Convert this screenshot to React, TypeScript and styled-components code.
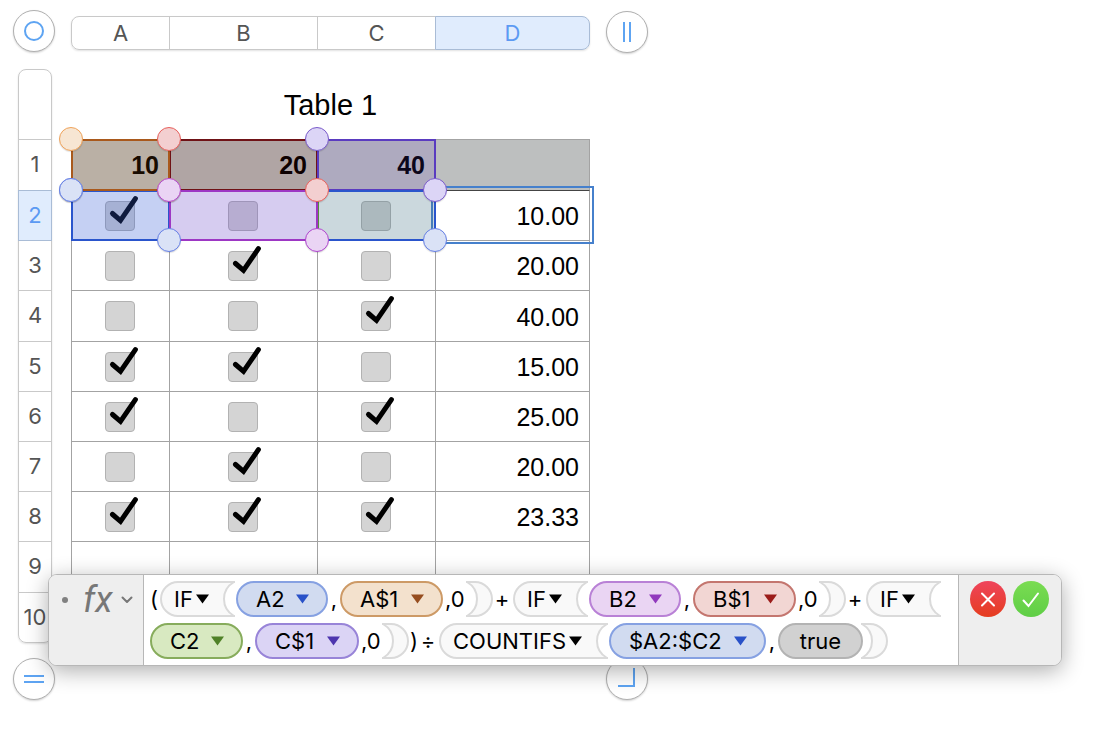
import React from 'react';
import styled, { createGlobalStyle, css } from 'styled-components';

const GlobalStyle = createGlobalStyle`
  *, *::before, *::after { box-sizing: border-box; }
  body {
    margin: 0;
    background: #fff;
    color: #000;
    font-family: Inter, "Liberation Sans", sans-serif;
  }
  button { font: inherit; color: inherit; cursor: pointer; }
`;

const COLUMN_TRACKS = '98px 148px 118px 155px';
const ROW_TRACKS = '51px 50px 50px 51px 50px 50px 50px 50px 51px 50px';

/* ---------- Sheet ---------- */

const Page = styled.main`
  position: relative;
  min-height: 100vh;
  padding: 10px 0 37px 13px;
`;

const Sheet = styled.section`
  display: grid;
  grid-template-columns: 42px max-content 42px;
  column-gap: 16px;
  align-items: start;
`;

const RoundButton = styled.button<{ $top?: number }>`
  display: flex;
  align-items: center;
  justify-content: center;
  width: 42px;
  height: 42px;
  margin-top: ${(p) => p.$top ?? 0}px;
  padding: 0;
  border: 1px solid #b0b0b0;
  border-radius: 50%;
  background: #fff;
  box-shadow: 0 1px 2px rgba(0, 0, 0, 0.18);
  svg { display: block; fill: none; stroke: #5ea4f2; stroke-width: 2; }
`;

const HeaderButton = styled.button<{ $selected?: boolean }>`
  padding: 0;
  border: 1px solid #c9c9c9;
  background: #fff;
  color: #555;
  font-size: 22px;
  line-height: 26px;
  ${(p) =>
    p.$selected &&
    css`
      z-index: 1;
      border-color: #a9bcd6;
      background: #e0ecfd;
      color: #5c9af3;
    `}
`;

const ColumnBar = styled.div`
  display: grid;
  grid-template-columns: ${COLUMN_TRACKS};
  height: 34px;
  margin: 6px 0 19px;
  border-radius: 8px;
  box-shadow: 0 1px 2px rgba(0, 0, 0, 0.12);
  ${HeaderButton}:not(:last-child) { margin-right: -1px; }
  ${HeaderButton}:first-child { border-radius: 8px 0 0 8px; }
  ${HeaderButton}:last-child { border-radius: 0 8px 8px 0; }
`;

const RowBar = styled.div`
  display: grid;
  grid-template-rows: 70px ${ROW_TRACKS};
  width: 34px;
  margin: 0 3px 0 5px;
  padding-bottom: 1px;
  border-radius: 8px;
  box-shadow: 0 1px 2px rgba(0, 0, 0, 0.12);
  ${HeaderButton} { margin-bottom: -1px; padding-bottom: 2px; }
  ${HeaderButton}:first-child { border-radius: 8px 8px 0 0; }
  ${HeaderButton}:last-child { border-radius: 0 0 8px 8px; }
`;

const TableArea = styled.div`
  position: relative;
  margin-bottom: 16px;
  font-family: "Liberation Sans", Arial, sans-serif;
`;

const DataTable = styled.table`
  width: 519px;
  table-layout: fixed;
  border-collapse: separate;
  border-spacing: 0;
  font-size: 25px;
  line-height: 28px;
`;

const Caption = styled.caption`
  height: 70px;
  padding-top: 18px;
  font-size: 29px;
  line-height: 36px;
`;

const cell = css`
  padding: 1px 10px 0 0;
  border: 0 solid #a3a3a3;
  border-width: 1px 0 0 1px;
  text-align: right;
  &:last-child { border-right-width: 1px; }
`;

const HeadCell = styled.th`
  ${cell}
  padding-top: 0;
  padding-bottom: 1px;
  background: #bdbfbf;
  font-weight: 700;
`;

const Cell = styled.td`
  ${cell}
`;

const CheckCell = styled.td`
  ${cell}
  padding: 10px 2px 0 0;
  vertical-align: top;
`;

const Row = styled.tr<{ $tall?: boolean; $first?: boolean; $last?: boolean }>`
  height: ${(p) => (p.$tall ? 51 : 50)}px;
  ${(p) => p.$first && css`td { border-top-color: #444; }`}
  ${(p) => p.$last && css`td { border-bottom-width: 1px; }`}
`;

const CheckLabel = styled.label`
  position: relative;
  display: block;
  width: 30px;
  height: 30px;
  margin: 0 auto;
  svg {
    position: absolute;
    inset: 0;
    overflow: visible;
    pointer-events: none;
  }
`;

const CheckInput = styled.input`
  appearance: none;
  display: block;
  width: 30px;
  height: 30px;
  margin: 0;
  border: 1px solid #b2b2b2;
  border-radius: 4px;
  background: #d4d4d4;
`;

/* ---------- Highlighted ranges over the cells ---------- */

const RangeLayer = styled.div`
  position: absolute;
  top: 70px;
  left: 0;
  display: grid;
  grid-template-columns: ${COLUMN_TRACKS};
  grid-template-rows: ${ROW_TRACKS};
  pointer-events: none;
`;

const RangeArea = styled.div<{ $area: string }>`
  position: relative;
  grid-area: ${(p) => p.$area};
  margin: 0 -1px -1px 0;
`;

const RangeBox = styled(RangeArea)<{ $line: string; $fill: string }>`
  border: 2px solid ${(p) => p.$line};
  background: ${(p) => p.$fill};
`;

const EditingBox = styled.div`
  grid-area: 2 / 4 / 3 / 5;
  margin: -4px -4px;
  border: 2px solid #4680cc;
`;

const Handle = styled.span<{ $line: string; $fill: string; $end?: boolean }>`
  position: absolute;
  ${(p) => (p.$end ? 'right: -11px; bottom: -11px;' : 'left: -12px; top: -12px;')}
  width: 24px;
  height: 24px;
  border: 1px solid ${(p) => p.$line};
  border-radius: 50%;
  background: ${(p) => p.$fill};
  box-shadow: 0 1px 1px rgba(0, 0, 0, 0.12);
`;

/* ---------- Formula bar ---------- */

const FormulaBar = styled.section`
  position: absolute;
  z-index: 2;
  top: 574px;
  left: 48px;
  right: 44px;
  display: flex;
  min-height: 92px;
  border: 1px solid #b7b7b7;
  border-radius: 9px;
  background: #fff;
  box-shadow: 0 5px 22px rgba(0, 0, 0, 0.32);
  overflow: hidden;
`;

const FunctionPanel = styled.div`
  flex: none;
  display: flex;
  align-items: flex-start;
  gap: 15px;
  width: 95px;
  padding: 6px 0 0 13px;
  border-right: 1px solid #b7b7b7;
  background: #eee;
`;

const Bullet = styled.span`
  width: 6px;
  height: 6px;
  margin-top: 16px;
  border-radius: 50%;
  background: #808080;
`;

const FunctionMenu = styled.button`
  display: flex;
  align-items: center;
  gap: 9px;
  height: 38px;
  padding: 0;
  border: 0;
  background: none;
  color: #777;
  font-family: Roboto, "Liberation Sans", sans-serif;
  font-size: 36px;
  font-style: italic;
  line-height: 38px;
  svg { display: block; }
`;

const Formula = styled.div`
  flex: 1;
  display: flex;
  flex-wrap: wrap;
  align-content: flex-start;
  row-gap: 6px;
  padding: 6px 0 6px 6px;
  font-size: 22px;
  line-height: 36px;
  white-space: nowrap;
`;

const Glyph = styled.span<{ $w: number }>`
  width: ${(p) => p.$w}px;
  height: 36px;
  text-align: center;
`;

const Paren = styled(Glyph)`
  text-align: left;
`;

const Argument = styled(Glyph)`
  padding-left: 2px;
  text-align: left;
`;

const Operator = styled(Glyph)`
  padding-right: 2px;
`;

const Pill = styled.button<{ $w: number; $line: string; $fill: string }>`
  display: flex;
  align-items: center;
  justify-content: space-between;
  width: ${(p) => p.$w}px;
  height: 36px;
  padding: 0 17px 0 18px;
  border: 2px solid ${(p) => p.$line};
  border-radius: 18px;
  background: ${(p) => p.$fill};
  line-height: 32px;
`;

const ValuePill = styled(Pill)`
  justify-content: center;
  margin-right: -3px;
  padding: 0;
`;

const Func = styled.button<{ $w: number }>`
  position: relative;
  display: flex;
  align-items: center;
  justify-content: space-between;
  width: ${(p) => p.$w}px;
  height: 36px;
  padding: 0 27px 0 14px;
  border: 0;
  background: none;
`;

const FuncShape = styled.svg`
  position: absolute;
  inset: 0;
  fill: #f9f9f9;
  stroke: #dadada;
  stroke-width: 2;
`;

const FuncName = styled.span`
  position: relative;
`;

const CloseShape = styled.svg`
  display: block;
  fill: #f9f9f9;
  stroke: #dadada;
  stroke-width: 2;
`;

const Arrow = styled.svg`
  position: relative;
  display: block;
`;

const ActionPanel = styled.div`
  flex: none;
  display: flex;
  align-items: flex-start;
  gap: 7px;
  width: 103px;
  padding: 6px 0 0 11px;
  border-left: 1px solid #b7b7b7;
  background: #eee;
`;

const ActionButton = styled.button<{ $from: string; $to: string }>`
  width: 36px;
  height: 36px;
  padding: 0;
  border: 0;
  border-radius: 50%;
  background: linear-gradient(${(p) => p.$from}, ${(p) => p.$to});
  svg { display: block; fill: none; stroke: #fff; stroke-width: 2; stroke-linecap: round; }
`;

/* ---------- Data ---------- */

const columns = ['A', 'B', 'C', 'D'];

const rows: { checks: boolean[]; total: string }[] = [
  { checks: [true, false, false], total: '10.00' },
  { checks: [false, true, false], total: '20.00' },
  { checks: [false, false, true], total: '40.00' },
  { checks: [true, true, false], total: '15.00' },
  { checks: [true, false, true], total: '25.00' },
  { checks: [false, true, false], total: '20.00' },
  { checks: [true, true, true], total: '23.33' },
];

const ranges = [
  { area: '1 / 2 / 2 / 3', line: '#6f1216', fill: 'rgba(96, 7, 0, 0.14)' },
  { area: '1 / 3 / 2 / 4', line: '#5a3bc0', fill: 'rgba(82, 40, 192, 0.14)' },
  { area: '2 / 3 / 3 / 4', line: '#57903c', fill: 'rgba(73, 119, 136, 0.286)' },
  { area: '2 / 1 / 3 / 4', line: '#2a55cc', fill: 'transparent' },
  { area: '2 / 1 / 3 / 2', line: '#2a55cc', fill: 'rgba(52, 91, 213, 0.286)' },
  { area: '2 / 2 / 3 / 3', line: '#9d37c4', fill: 'rgba(112, 77, 203, 0.286)' },
  { area: '1 / 1 / 2 / 2', line: '#a9591c', fill: 'rgba(167, 84, 8, 0.14)' },
];

const handles = [
  { area: '1 / 1 / 2 / 2', line: '#f0a35a', fill: '#f7e6d3' },
  { area: '1 / 3 / 2 / 4', line: '#7a5bcb', fill: '#dcd5f6' },
  { area: '1 / 2 / 2 / 3', line: '#e8605c', fill: '#f3cfd0' },
  { area: '2 / 1 / 3 / 2', line: '#6680e6', fill: '#dae2f6' },
  { area: '2 / 2 / 3 / 3', line: '#b045cf', fill: '#ead4f4' },
  { area: '2 / 1 / 3 / 4', line: '#6680e6', fill: '#dae2f6' },
];

const tones = {
  blue: { line: '#86a1e2', fill: '#d1dbf0', arrow: '#2951c8' },
  orange: { line: '#cd9a66', fill: '#f3e1cd', arrow: '#964d1f' },
  violet: { line: '#b981d6', fill: '#ead5f3', arrow: '#9139bd' },
  red: { line: '#c4766f', fill: '#f2d6d3', arrow: '#9b1c1a' },
  green: { line: '#87ac5c', fill: '#d8e9c1', arrow: '#4f8127' },
  purple: { line: '#9884d8', fill: '#dbd4f5', arrow: '#4d35ae' },
};

/* ---------- Parts ---------- */

function CheckBox({ name, checked }: { name: string; checked: boolean }) {
  return (
    <CheckLabel>
      <CheckInput type="checkbox" aria-label={name} checked={checked} readOnly />
      {checked && (
        <svg width="30" height="30" viewBox="0 0 30 30" fill="none" stroke="#000" strokeWidth="5" strokeLinecap="round">
          <path d="M7.5 12.5 L15.5 19.4 L30.4 -2.4" />
        </svg>
      )}
    </CheckLabel>
  );
}

function Triangle({ color = '#000' }: { color?: string }) {
  return (
    <Arrow width="13" height="10" viewBox="0 0 13 10">
      <path d="M0 0.5 H13 L6.5 9.5 Z" fill={color} />
    </Arrow>
  );
}

function Reference({ tone, w, children }: { tone: keyof typeof tones; w: number; children: string }) {
  const t = tones[tone];
  return (
    <Pill type="button" $w={w} $line={t.line} $fill={t.fill}>
      {children}
      <Triangle color={t.arrow} />
    </Pill>
  );
}

function FunctionOpen({ w, children }: { w: number; children: string }) {
  const notch = `C${w - 9} 5 ${w - 12} 11 ${w - 12} 18 C${w - 12} 25 ${w - 9} 31 ${w - 2} 35`;
  return (
    <Func type="button" $w={w}>
      <FuncShape width={w} height="36" viewBox={`0 0 ${w} 36`}>
        <path stroke="none" d={`M18 1 H${w - 2} ${notch} H18 A17 17 0 0 1 18 1 Z`} />
        <path fill="none" d={`M${w - 1} 1 H18 A17 17 0 0 0 18 35 H${w - 1}`} />
        <path fill="none" d={`M${w - 2} 1 ${notch}`} />
      </FuncShape>
      <FuncName>{children}</FuncName>
      <Triangle />
    </Func>
  );
}

function FunctionClose() {
  const notch = 'C9 5 12 11 12 18 C12 25 9 31 2 35';
  return (
    <CloseShape width="28" height="36" viewBox="0 0 28 36">
      <path stroke="none" d={`M2 1 ${notch} H10 A17 17 0 0 0 10 1 Z`} />
      <path fill="none" d="M1 1 H10 A17 17 0 0 1 10 35 H1" />
      <path fill="none" d={`M2 1 ${notch}`} />
    </CloseShape>
  );
}

export default function App() {
  return (
    <Page>
      <GlobalStyle />
      <Sheet>
        <RoundButton type="button" aria-label="Select table">
          <svg width="22" height="22"><circle cx="11" cy="11" r="9" /></svg>
        </RoundButton>
        <ColumnBar>
          {columns.map((c) => (
            <HeaderButton key={c} type="button" $selected={c === 'D'}>{c}</HeaderButton>
          ))}
        </ColumnBar>
        <RoundButton type="button" aria-label="Add column" $top={1}>
          <svg width="22" height="22"><path d="M8 1 V21 M14 1 V21" /></svg>
        </RoundButton>

        <RowBar>
          <HeaderButton type="button" aria-label="Table title" />
          {Array.from({ length: 10 }, (_, i) => (
            <HeaderButton key={i} type="button" $selected={i === 1}>{i + 1}</HeaderButton>
          ))}
        </RowBar>
        <TableArea>
          <DataTable>
            <Caption>Table 1</Caption>
            <colgroup>
              <col width="98" /><col width="148" /><col width="118" /><col width="155" />
            </colgroup>
            <thead>
              <Row $tall>
                <HeadCell>10</HeadCell>
                <HeadCell>20</HeadCell>
                <HeadCell>40</HeadCell>
                <HeadCell />
              </Row>
            </thead>
            <tbody>
              {rows.map((r, i) => (
                <Row key={i} $first={i === 0} $tall={i === 2}>
                  {r.checks.map((on, c) => (
                    <CheckCell key={c}><CheckBox name={`${columns[c]}${i + 2}`} checked={on} /></CheckCell>
                  ))}
                  <Cell>{r.total}</Cell>
                </Row>
              ))}
              <Row $tall><Cell /><Cell /><Cell /><Cell /></Row>
              <Row $last><Cell /><Cell /><Cell /><Cell /></Row>
            </tbody>
          </DataTable>
          <RangeLayer>
            {ranges.map((r, i) => (
              <RangeBox key={i} $area={r.area} $line={r.line} $fill={r.fill} />
            ))}
            <EditingBox />
            {handles.map((h, i) => (
              <RangeArea key={i} $area={h.area}>
                <Handle $line={h.line} $fill={h.fill} />
                <Handle $line={h.line} $fill={h.fill} $end />
              </RangeArea>
            ))}
          </RangeLayer>
        </TableArea>
        <span />

        <RoundButton type="button" aria-label="Add row">
          <svg width="22" height="22"><path d="M1 8 H21 M1 14 H21" /></svg>
        </RoundButton>
        <span />
        <RoundButton type="button" aria-label="Resize table">
          <svg width="22" height="22"><path d="M2 18 H18 V0" /></svg>
        </RoundButton>
      </Sheet>

      <FormulaBar aria-label="Formula editor">
        <FunctionPanel>
          <Bullet />
          <FunctionMenu type="button">
            fx
            <svg width="12" height="8" viewBox="0 0 12 8" fill="none" stroke="#777" strokeWidth="2" strokeLinecap="round" strokeLinejoin="round">
              <path d="M1.5 1.5 L6 6 L10.5 1.5" />
            </svg>
          </FunctionMenu>
        </FunctionPanel>
        <Formula>
          <Paren $w={10}>(</Paren>
          <FunctionOpen w={76}>IF</FunctionOpen>
          <Reference tone="blue" w={92}>A2</Reference>
          <Glyph $w={12}>,</Glyph>
          <Reference tone="orange" w={103}>A$1</Reference>
          <Argument $w={22}>,0</Argument>
          <FunctionClose />
          <Operator $w={20}>+</Operator>
          <FunctionOpen w={76}>IF</FunctionOpen>
          <Reference tone="violet" w={92}>B2</Reference>
          <Glyph $w={12}>,</Glyph>
          <Reference tone="red" w={103}>B$1</Reference>
          <Argument $w={22}>,0</Argument>
          <FunctionClose />
          <Operator $w={20}>+</Operator>
          <FunctionOpen w={76}>IF</FunctionOpen>
          <Reference tone="green" w={93}>C2</Reference>
          <Glyph $w={12}>,</Glyph>
          <Reference tone="purple" w={104}>C$1</Reference>
          <Argument $w={22}>,0</Argument>
          <FunctionClose />
          <Glyph $w={10}>)</Glyph>
          <Operator $w={20}>÷</Operator>
          <FunctionOpen w={170}>COUNTIFS</FunctionOpen>
          <Reference tone="blue" w={157}>$A2:$C2</Reference>
          <Glyph $w={12}>,</Glyph>
          <ValuePill type="button" $w={85} $line="#b3b3b3" $fill="#d1d1d1">true</ValuePill>
          <FunctionClose />
        </Formula>
        <ActionPanel>
          <ActionButton type="button" aria-label="Cancel" $from="#ef445c" $to="#e53d1f">
            <svg width="36" height="36"><path d="M12 12.5 L24 24.5 M24 12.5 L12 24.5" /></svg>
          </ActionButton>
          <ActionButton type="button" aria-label="Accept" $from="#7adc52" $to="#5fce46">
            <svg width="36" height="36"><path d="M10.5 19.5 L15.5 25 L25 12.5" /></svg>
          </ActionButton>
        </ActionPanel>
      </FormulaBar>
    </Page>
  );
}
